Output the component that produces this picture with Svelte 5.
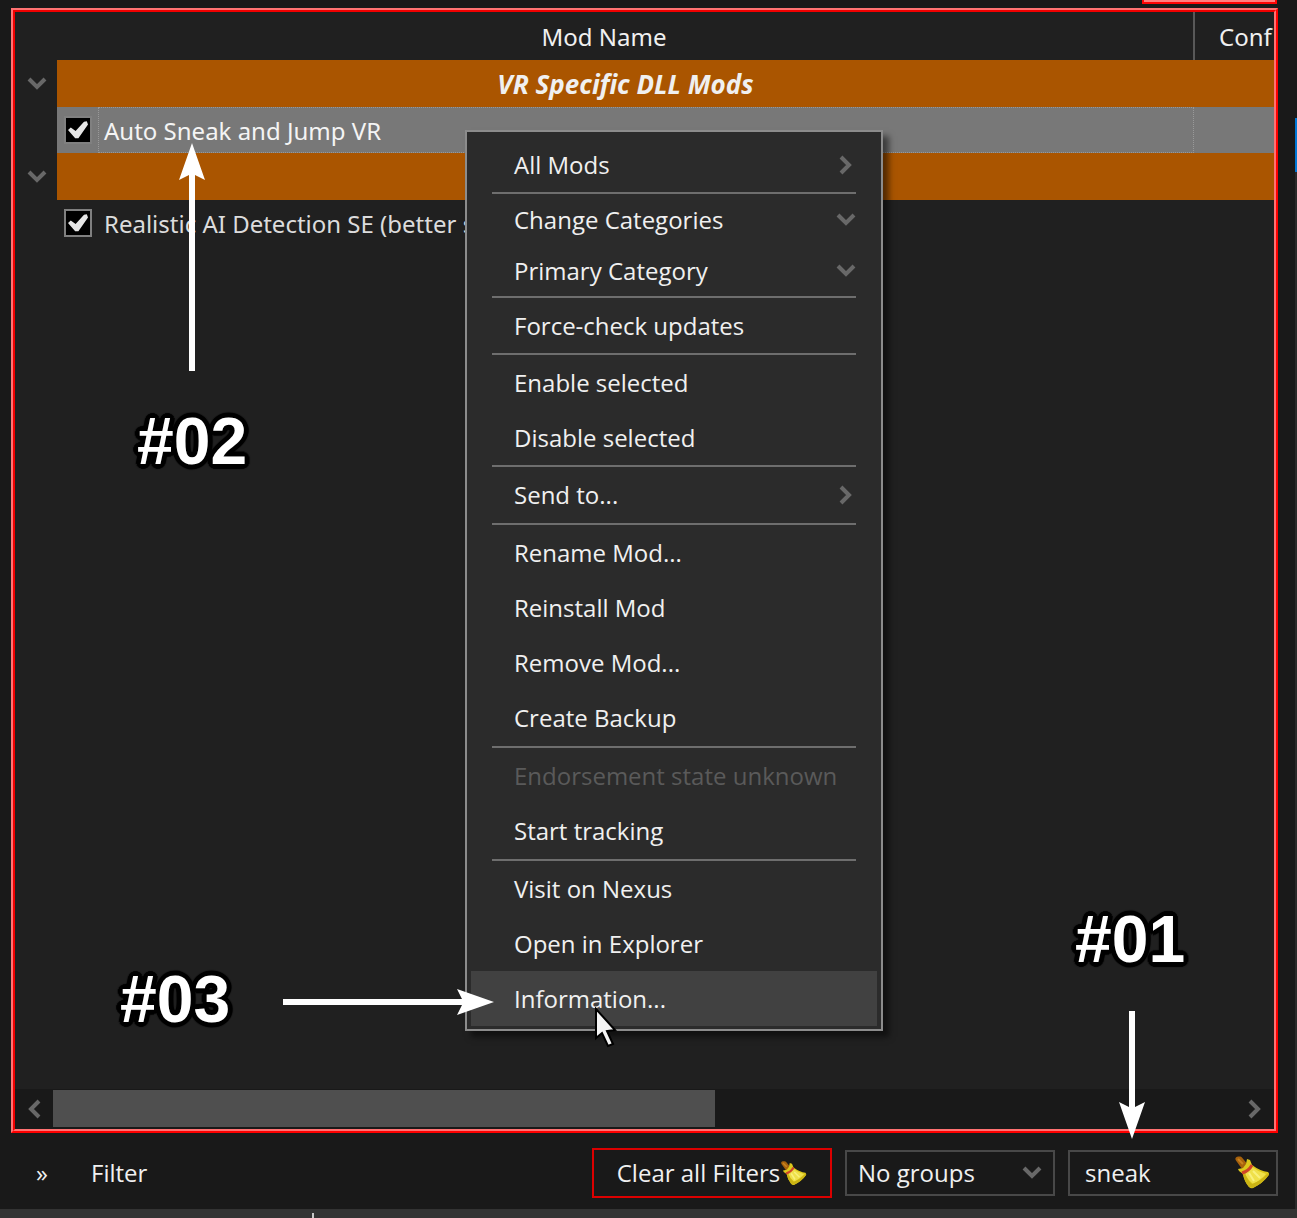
<script>
  let filter = $state('sneak');
  let group = $state('No groups');

  const rows = [
    { kind: 'group', title: 'VR Specific DLL Mods' },
    { kind: 'mod', title: 'Auto Sneak and Jump VR', selected: true },
    { kind: 'group', title: '' },
    { kind: 'mod', title: 'Realistic AI Detection SE (better s', selected: false }
  ];

  const menu = [
    [{ label: 'All Mods', arrow: 'right' }],
    [
      { label: 'Change Categories', arrow: 'down', compact: true },
      { label: 'Primary Category', arrow: 'down', compact: true }
    ],
    [{ label: 'Force-check updates' }],
    [{ label: 'Enable selected' }, { label: 'Disable selected' }],
    [{ label: 'Send to...', arrow: 'right' }],
    [
      { label: 'Rename Mod...' },
      { label: 'Reinstall Mod' },
      { label: 'Remove Mod...' },
      { label: 'Create Backup' }
    ],
    [{ label: 'Endorsement state unknown', disabled: true }, { label: 'Start tracking' }],
    [
      { label: 'Visit on Nexus' },
      { label: 'Open in Explorer' },
      { label: 'Information...', active: true }
    ]
  ];
</script>

{#snippet chevron(dir)}
  <svg class="chevron {dir}" viewBox="0 0 20 20" width="20" height="20" aria-hidden="true">
    <path d="M2 5 L10 13 L18 5" />
  </svg>
{/snippet}

{#snippet broom(size)}
  <svg class="broom" viewBox="0 0 36 36" width={size} height={size} aria-hidden="true">
    <path d="M4 4 L6 4 L11 10 L9 11 Z" fill="#b06a10" stroke="#a8620c" stroke-width="5" stroke-linejoin="round" />
    <path d="M4 4 L9 9" fill="none" stroke="#c98420" stroke-width="2" />
    <path d="M4 14 L9 13 L12 9 L13 4 L16 5 L18 10 Q26 16 34 17 Q36 19 34 21 Q29 28 19 33 Q17 34 15 32 Q10 26 9 19 L5 16 Z" fill="#dcc81c" />
    <path d="M11 19 L18 12 Q25 17 32 19 Q27 25 19 29 Q14 25 11 19 Z" fill="#efe04a" />
    <path d="M15 32 Q10 26 9 19 L11 18 Q13 25 18 29 Q27 26 34 18 Q36 19 34 21 Q29 28 19 33 Z" fill="#cbb414" />
    <path d="M15 18 L20 26 M19 16 L26 23" fill="none" stroke="#f8f07c" stroke-width="2" />
    <path d="M8 18 Q15 16 18 10" fill="none" stroke="#cf4428" stroke-width="3" />
  </svg>
{/snippet}

{#snippet arrow(length)}
  <svg class="pointer" viewBox="0 0 {length} 26" width={length} height="26" aria-hidden="true">
    <path d="M0 10 H{length - 32} L{length - 37} 0 L{length} 13 L{length - 37} 26 L{length - 32} 16 H0 Z" />
  </svg>
{/snippet}

<main class="page">
  <div class="top-tab"></div>
  <div class="side-strip"></div>

  <section class="panel">
    <div class="panel-inner">
      <table>
        <colgroup>
          <col class="col-toggle" />
          <col />
          <col class="col-conf" />
        </colgroup>
        <thead>
          <tr>
            <th colspan="2">Mod Name</th>
            <th class="conf">Conf</th>
          </tr>
        </thead>
        <tbody>
          {#each rows as row}
            {#if row.kind === 'group'}
              <tr class="group">
                <td class="toggle">
                  <button type="button" aria-label="Collapse group">{@render chevron('down')}</button>
                </td>
                <td class="title">{row.title}</td>
                <td></td>
              </tr>
            {:else}
              <tr class="mod" class:selected={row.selected}>
                <td class="toggle"></td>
                <td>
                  <label class="mod-name">
                    <input type="checkbox" checked />
                    <span>{row.title}</span>
                  </label>
                </td>
                <td></td>
              </tr>
            {/if}
          {/each}
        </tbody>
      </table>

      <div class="scrollbar">
        <button type="button" aria-label="Scroll left">{@render chevron('left')}</button>
        <div class="track"><div class="thumb"></div></div>
        <button type="button" aria-label="Scroll right">{@render chevron('right')}</button>
      </div>
    </div>
  </section>

  <footer class="filters">
    <button type="button" class="expand" aria-label="Show filters">»</button>
    <label class="filter-label" for="filter">Filter</label>
    <button type="button" class="clear">Clear all Filters{@render broom(27)}</button>
    <div class="select-box">
      <select bind:value={group} aria-label="Grouping">
        <option>No groups</option>
      </select>
      {@render chevron('down')}
    </div>
    <div class="search-box">
      <input id="filter" type="text" bind:value={filter} />
      <button type="button" aria-label="Clear filter">{@render broom(36)}</button>
    </div>
  </footer>
  <div class="status"><span class="tick"></span></div>

  <div class="menu" role="menu">
    {#each menu as section}
      <div class="section">
        {#each section as item}
          <button
            type="button"
            role="menuitem"
            class:compact={item.compact}
            class:active={item.active}
            disabled={item.disabled}
          >
            <span>{item.label}</span>
            {#if item.arrow}{@render chevron(item.arrow)}{/if}
          </button>
        {/each}
      </div>
    {/each}
  </div>

  <div class="note step-two">{@render arrow(228)}</div>
  <div class="note label-two">#02</div>
  <div class="note step-three">{@render arrow(211)}</div>
  <div class="note label-three">#03</div>
  <div class="note step-one">{@render arrow(128)}</div>
  <div class="note label-one">#01</div>

  <svg class="cursor" viewBox="0 0 24 42" width="24" height="42" aria-hidden="true">
    <path d="M2 2 V31 L8 26 L14 39 L19 37 L13 24 L21 23 Z" />
  </svg>
</main>

<style>
  :global(body) {
    margin: 0;
    background: #191919;
  }

  .page {
    position: relative;
    display: flex;
    flex-direction: column;
    min-height: 100vh;
    overflow: hidden;
    box-sizing: border-box;
    padding-top: 8px;
    color: #f0f0f0;
    font-family: 'Open Sans', 'Noto Sans', sans-serif;
    font-size: 24px;
    line-height: 32px;
  }

  button,
  input,
  select {
    margin: 0;
    padding: 0;
    border: 0;
    border-radius: 0;
    background: none;
    color: inherit;
    font: inherit;
    outline: none;
  }

  .top-tab {
    position: absolute;
    top: 0;
    right: 20px;
    width: 131px;
    height: 2px;
    border: 2px solid #ff0505;
    border-top: 0;
    background: #ff8080;
  }

  .side-strip {
    position: absolute;
    top: 118px;
    right: 0;
    bottom: 9px;
    width: 2px;
    border-top: 54px solid #0078d7;
    background: #2a2a2a;
  }

  .panel {
    flex: 1;
    display: flex;
    margin: 0 19px 0 11px;
    border: 2px solid;
    border-color: #ff7272 #ff0000 #ff0000 #ff7272;
  }

  .panel-inner {
    flex: 1;
    display: flex;
    flex-direction: column;
    min-width: 0;
    border: 2px solid;
    border-color: #f00000 #ff7272 #ff7272 #f00000;
    background: #202020;
  }

  table {
    width: 100%;
    table-layout: fixed;
    border-collapse: collapse;
    font-family: 'Noto Sans', 'Open Sans', sans-serif;
  }

  .col-toggle {
    width: 42px;
  }

  .col-conf {
    width: 80px;
  }

  th {
    height: 46px;
    padding: 2px 0 0;
    font-weight: 400;
  }

  th.conf {
    border-left: 2px solid #585858;
    padding-left: 24px;
    text-align: left;
    overflow: hidden;
    white-space: nowrap;
  }

  td {
    height: 46px;
    padding: 0;
    white-space: nowrap;
  }

  .group td {
    height: 47px;
    background: #aa5500;
  }

  .group td.toggle,
  .mod td.toggle {
    background: none;
  }

  .toggle button {
    display: flex;
    margin-left: 12px;
  }

  .title {
    text-align: center;
    font-size: 26px;
    font-weight: 700;
    font-style: italic;
  }

  .selected td {
    background: #787878;
  }

  .mod-name {
    display: flex;
    align-items: center;
    height: 46px;
    color: #dcdcdc;
  }

  .selected .mod-name {
    color: #f4f4f4;
  }

  .mod-name span {
    flex: 1;
    box-sizing: border-box;
    height: 46px;
    margin-left: 6px;
    padding-left: 5px;
    line-height: 46px;
    border: 1px dotted transparent;
  }

  .selected .mod-name span {
    border-color: #999;
  }

  .mod-name input {
    appearance: none;
    flex: none;
    display: flex;
    box-sizing: border-box;
    width: 28px;
    height: 28px;
    margin-left: 7px;
    border: 2px solid #808080;
    background: #000;
  }

  .mod-name input:checked::before {
    content: '';
    flex: 1;
    margin: 3px 2px;
    background: #e6e6e6;
    clip-path: polygon(0 50%, 14% 36%, 38% 56%, 80% 4%, 94% 2%, 100% 20%, 52% 96%, 36% 96%);
  }

  .chevron {
    flex: none;
    display: block;
  }

  .chevron path {
    fill: none;
    stroke: #686868;
    stroke-width: 4;
  }

  .chevron.right {
    transform: rotate(-90deg);
  }

  .chevron.left {
    transform: rotate(90deg);
  }

  .scrollbar {
    display: flex;
    height: 40px;
    margin-top: auto;
    background: #191919;
  }

  .scrollbar button {
    flex: none;
    display: flex;
    align-items: center;
    justify-content: center;
    width: 38px;
  }

  .track {
    flex: 1;
    display: flex;
    padding: 1px 0 2px;
  }

  .thumb {
    width: 56%;
    background: #4f4f4f;
  }

  .filters {
    display: flex;
    align-items: center;
    height: 76px;
    padding: 4px 19px 0 36px;
    box-sizing: border-box;
  }

  .expand {
    width: 55px;
    text-align: left;
  }

  .filter-label {
    flex: 1;
  }

  .clear {
    display: flex;
    align-items: center;
    justify-content: center;
    box-sizing: border-box;
    width: 240px;
    height: 50px;
    border: 2px solid #dc0000;
    white-space: nowrap;
  }

  .broom {
    flex: none;
    display: block;
  }

  .select-box,
  .search-box {
    display: flex;
    align-items: center;
    box-sizing: border-box;
    width: 210px;
    height: 46px;
    margin-left: 13px;
    border: 2px solid #484848;
  }

  .select-box {
    padding: 0 11px;
  }

  .select-box select {
    appearance: none;
    flex: 1;
    min-width: 0;
  }

  .search-box {
    padding: 0 6px 0 15px;
  }

  .search-box input {
    flex: 1;
    min-width: 0;
  }

  .status {
    height: 9px;
    background: #333;
  }

  .tick {
    display: block;
    width: 2px;
    height: 5px;
    margin-left: 312px;
    border-top: 4px solid #333;
    background: #c8c8c8;
  }

  .menu {
    position: absolute;
    top: 130px;
    left: 465px;
    box-sizing: border-box;
    width: 418px;
    padding: 5px 4px 3px;
    border: 2px solid #8c8c8c;
    background: #2b2b2b;
    box-shadow: 6px 6px 6px rgba(0, 0, 0, 0.5);
  }

  .section:nth-child(n + 5):not(:last-child) {
    padding-bottom: 1px;
  }

  .section + .section::before {
    content: '';
    display: block;
    height: 2px;
    margin: 0 21px;
    background: #6e6e6e;
  }

  .menu button {
    display: flex;
    align-items: center;
    justify-content: space-between;
    width: 100%;
    height: 55px;
    padding: 0 21px 0 43px;
    text-align: left;
    white-space: nowrap;
  }

  .menu button.compact {
    height: 51px;
  }

  .menu button.active {
    background: #414141;
  }

  .menu button:disabled {
    color: #5a5a5a;
  }

  .note {
    position: absolute;
    pointer-events: none;
  }

  .pointer {
    display: block;
    fill: #fff;
  }

  .label-one,
  .label-two,
  .label-three {
    color: #fff;
    font-family: 'Liberation Sans', Arial, sans-serif;
    font-size: 66px;
    font-weight: 700;
    line-height: 76px;
    text-shadow:
      5px 0 1px #000,
      4px 2px 1px #000,
      3px 3px 1px #000,
      2px 4px 1px #000,
      0 5px 1px #000,
      -2px 4px 1px #000,
      -3px 3px 1px #000,
      -4px 2px 1px #000,
      -5px 0 1px #000,
      -4px -2px 1px #000,
      -3px -3px 1px #000,
      -2px -4px 1px #000,
      0 -5px 1px #000,
      2px -4px 1px #000,
      3px -3px 1px #000,
      4px -2px 1px #000;
  }

  .label-two {
    top: 403px;
    left: 137px;
  }

  .label-three {
    top: 961px;
    left: 120px;
  }

  .label-one {
    top: 901px;
    left: 1075px;
  }

  .step-two {
    top: 371px;
    left: 179px;
    transform: rotate(-90deg);
    transform-origin: 0 0;
  }

  .step-three {
    top: 989px;
    left: 283px;
  }

  .step-one {
    top: 1011px;
    left: 1145px;
    transform: rotate(90deg);
    transform-origin: 0 0;
  }

  .cursor {
    position: absolute;
    top: 1007px;
    left: 594px;
    fill: #f4f4f4;
    stroke: #000;
    stroke-width: 2;
  }
</style>
